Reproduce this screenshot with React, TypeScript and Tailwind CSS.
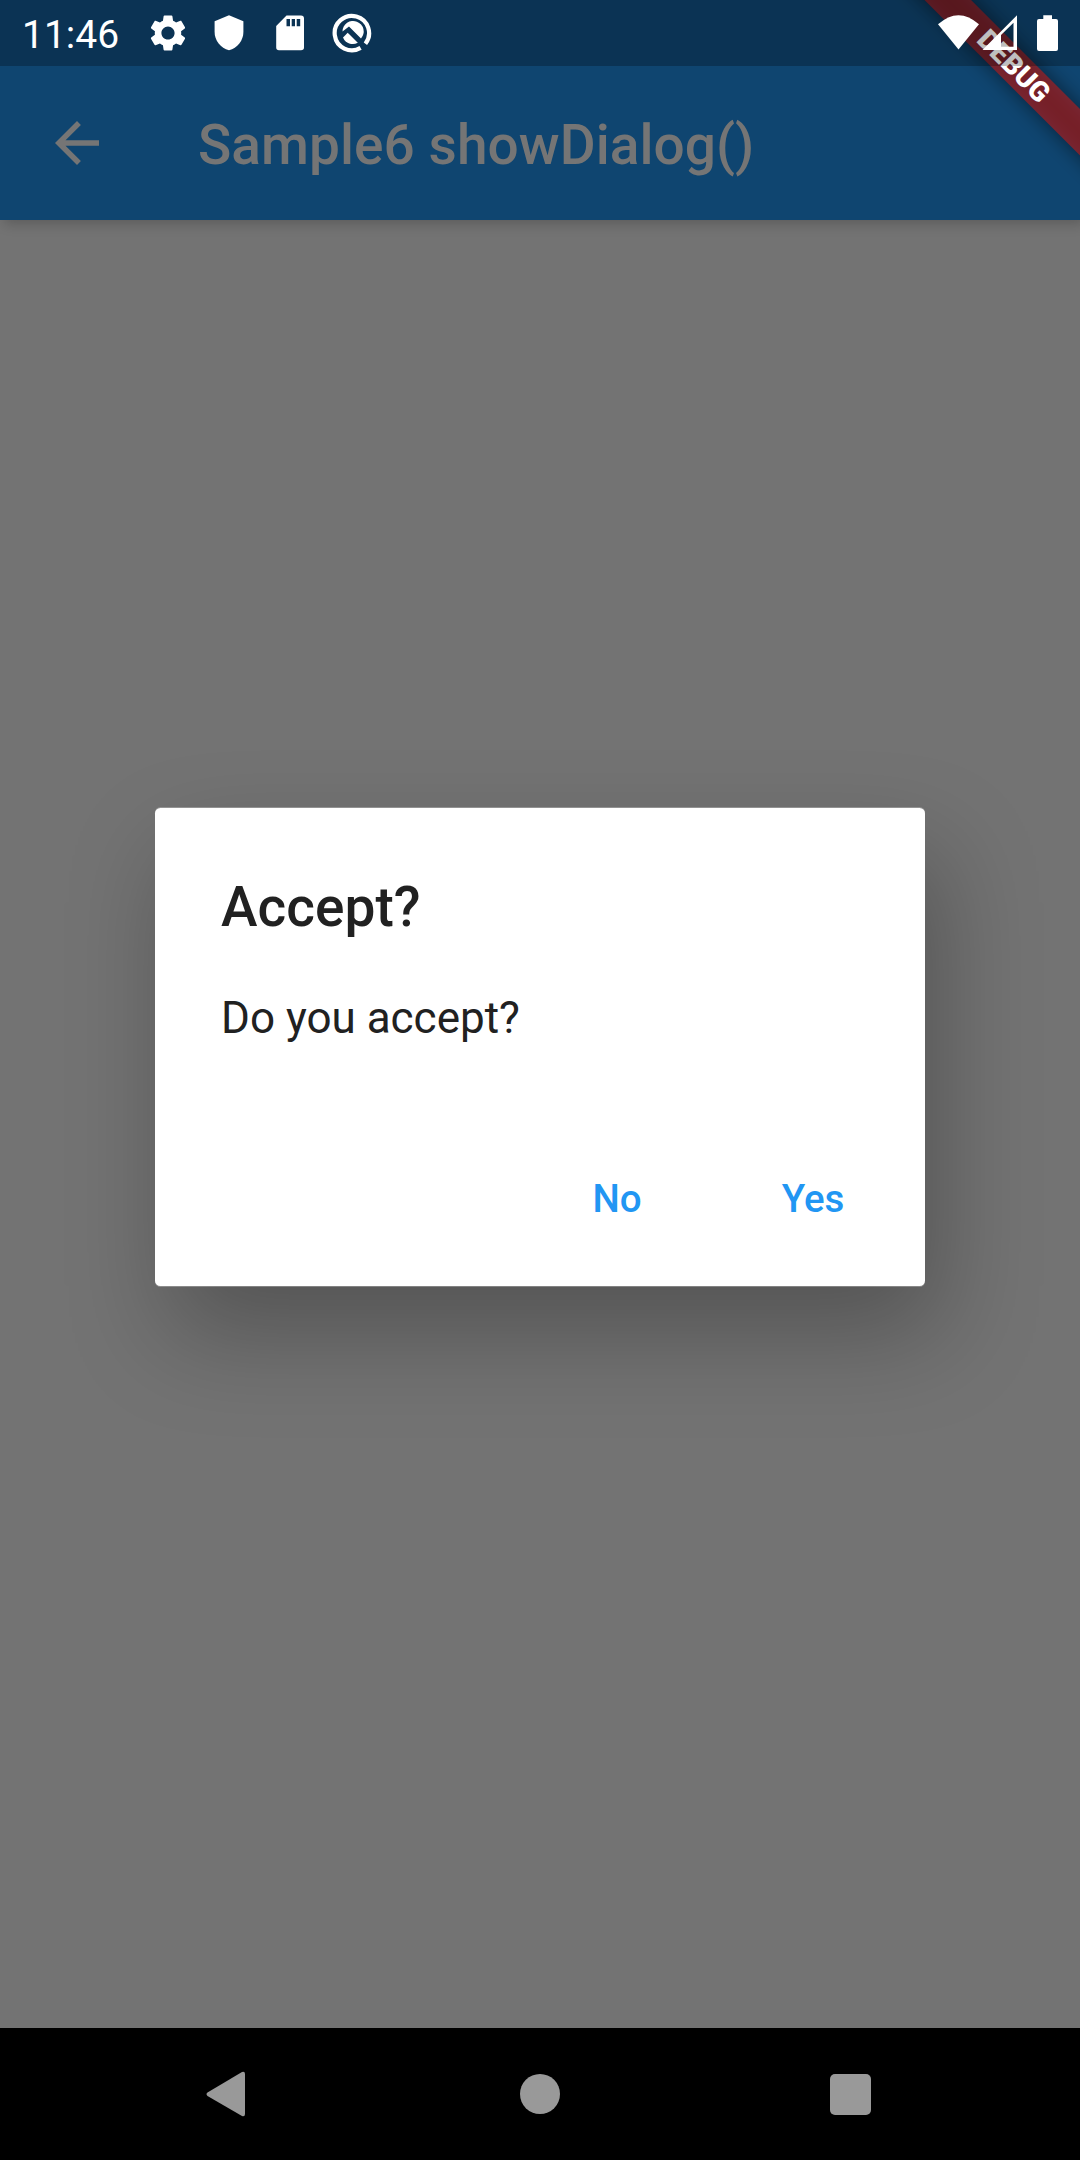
import React from "react";

function StatusIcons() {
  return (
    <div className="flex items-center text-white">
      <svg className="h-[44px] w-[44px]" viewBox="0 0 24 24" fill="currentColor">
        <path d="M19.14,12.94c0.04-0.3,0.06-0.61,0.06-0.94c0-0.32-0.02-0.64-0.07-0.94l2.03-1.58c0.18-0.14,0.23-0.41,0.12-0.61l-1.92-3.32c-0.12-0.22-0.37-0.29-0.59-0.22l-2.39,0.96c-0.5-0.38-1.03-0.7-1.62-0.94L14.4,2.81c-0.04-0.24-0.24-0.41-0.48-0.41h-3.84c-0.24,0-0.43,0.17-0.47,0.41L9.25,5.35C8.66,5.59,8.12,5.92,7.63,6.29L5.24,5.33c-0.22-0.08-0.47,0-0.59,0.22L2.74,8.87C2.62,9.08,2.66,9.34,2.86,9.48l2.03,1.58C4.84,11.36,4.8,11.69,4.8,12s0.02,0.64,0.07,0.94l-2.03,1.58c-0.18,0.14-0.23,0.41-0.12,0.61l1.92,3.32c0.12,0.22,0.37,0.29,0.59,0.22l2.39-0.96c0.5,0.38,1.03,0.7,1.62,0.94l0.36,2.54c0.05,0.24,0.24,0.41,0.48,0.41h3.84c0.24,0,0.44-0.17,0.47-0.41l0.36-2.54c0.59-0.24,1.13-0.56,1.62-0.94l2.39,0.96c0.22,0.08,0.47,0,0.59-0.22l1.92-3.32c0.12-0.22,0.07-0.47-0.12-0.61L19.14,12.94z M12,15.6c-1.98,0-3.6-1.62-3.6-3.6s1.62-3.6,3.6-3.6s3.6,1.62,3.6,3.6S13.98,15.6,12,15.6z" />
      </svg>
      <svg className="ml-[24px] h-[36px] w-[30px]" viewBox="0 0 30 36" fill="currentColor">
        <path d="M15 .3 29.4 6.2V17c0 8.5-6 16-14.4 18.3C6.6 33 .6 25.5 .6 17V6.2Z" />
      </svg>
      <svg className="ml-[31px] h-[36px] w-[30px]" viewBox="0 0 30 36" fill="currentColor">
        <path fillRule="evenodd" d="M11.5 .5H26Q29 .5 29 3.5V32.5Q29 35.3 26 35.3H4Q1.2 35.3 1.2 32.5V11ZM11.5 4V11.2H15V4ZM16.7 4V11.2H20V4ZM21.7 4V11.2H25.2V4Z" />
      </svg>
      <svg className="ml-[27px] h-[40px] w-[40px]" viewBox="0 0 40 40">
        <path d="M28.6 34.9A17.2 17.2 0 1 1 33.4 30.7" fill="none" stroke="currentColor" strokeWidth="4.2" />
        <path d="M10.5 18.5A10.6 10.6 0 1 1 29 25.6L17 13.6Z" fill="currentColor" />
        <path d="M11 24.5 15.7 19.8 25.8 29.8A10.6 10.6 0 0 1 11 24.5Z" fill="currentColor" />
      </svg>
    </div>
  );
}

function SignalIcons() {
  return (
    <svg className="h-[40px] w-[124px] text-white" viewBox="936 13 124 40" fill="currentColor">
      <path d="M938 24.3Q958.5 6 979 24.3L958.5 49.4Z" />
      <path fillRule="evenodd" d="M982.5 50 1017 15.3V50ZM1001 35V46.8H1013.5V22.7Z" />
      <path d="M1043.3 15.3H1052V19H1056Q1058 19 1058 21V49Q1058 51 1056 51H1039Q1037 51 1037 49V21Q1037 19 1039 19H1043.3Z" />
    </svg>
  );
}

export default function App() {
  return (
    <div className="relative flex h-[2160px] w-[1080px] flex-col overflow-hidden bg-black font-[Roboto,sans-serif]">
      <header className="relative z-10 flex h-[220px] shrink-0 flex-col bg-[#0f4570] pt-[66px] shadow-[4px_4px_12px_rgba(0,0,0,0.2)]">
        <div className="flex h-[154px] items-center text-[#757575]">
          <svg className="ml-[44px] h-[66px] w-[66px]" viewBox="0 0 24 24" fill="currentColor">
            <path d="M20 11H7.83l5.59-5.59L12 4l-8 8 8 8 1.41-1.41L7.83 13H20v-2z" />
          </svg>
          <h1 className="mt-[3px] ml-[88px] whitespace-nowrap text-[55px] leading-[64px] font-medium tracking-[0.05px]">Sample6 showDialog()</h1>
        </div>
      </header>

      <main className="flex flex-1 flex-col items-center bg-[#737373] pt-[588px]">
        <section
          role="dialog"
          className="flex h-[478px] w-[770px] flex-col rounded-[5.5px] bg-white text-[#212121] shadow-[0_1px_0_rgba(255,255,255,0.25),0_-1px_0_rgba(255,255,255,0.25),14px_47px_100px_rgba(0,0,0,0.27)]"
        >
          <h2 className="mt-[67px] ml-[66px] text-[55px] leading-[64px] font-medium tracking-[0.05px]">Accept?</h2>
          <p className="mt-[54px] ml-[66px] text-[44px] leading-[51px]">Do you accept?</p>
          <div className="mt-[89px] mr-[24px] flex justify-end gap-[20px] text-[38.5px] font-medium text-[#2196f3]">
            <button className="h-[132px] w-[176px]">No</button>
            <button className="h-[132px] w-[176px]">Yes</button>
          </div>
        </section>
      </main>

      <nav className="flex h-[132px] shrink-0 items-center bg-black text-[#999]">
        <svg className="ml-[205px] h-[48px] w-[42px]" viewBox="0 0 42 48" fill="currentColor">
          <path d="M37 2Q40 1 40 4V44Q40 47 37 46L2.5 26Q.5 24.3 2.5 22.6Z" />
        </svg>
        <span className="ml-[273px] h-[40px] w-[40px] rounded-full bg-[#999]" />
        <span className="mt-px ml-[270px] h-[41px] w-[41px] rounded-[5px] bg-[#999]" />
      </nav>

      {/* Debug ribbon, hung from the top right corner */}
      <div className="absolute top-0 left-[1080px] z-20 h-0 w-0 rotate-45">
        <div className="absolute top-[77px] left-[-160px] h-[33px] w-[320px] bg-black/50 blur-[10px]" />
        <div className="absolute top-[77px] left-[-160px] flex h-[33px] w-[320px] items-center justify-center bg-[#b71c1c]/63 text-[28px] leading-[33px] font-black text-white">
          DEBUG
        </div>
      </div>

      <div className="absolute inset-x-0 top-0 z-30 flex h-[66px] items-center bg-black/25">
        <span className="mt-[4px] ml-[22px] w-[124px] text-[39px] leading-[66px] text-white">11:46</span>
        <StatusIcons />
        <div className="ml-auto pr-[20px]">
          <SignalIcons />
        </div>
      </div>
    </div>
  );
}
